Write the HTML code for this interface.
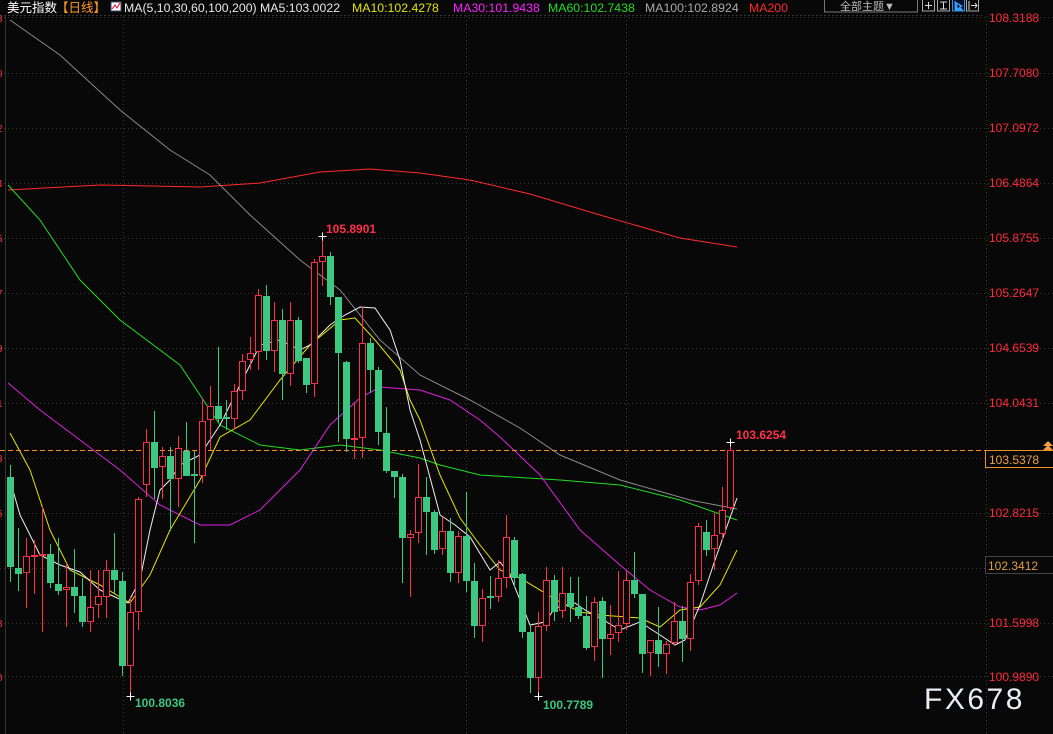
<!DOCTYPE html>
<html><head><meta charset="utf-8"><style>
html,body{margin:0;padding:0;background:#080808;width:1053px;height:734px;overflow:hidden;font-family:"Liberation Sans","Noto Sans CJK SC",sans-serif}
svg{position:absolute;left:0;top:0}
</style></head><body>
<svg id="c" width="1053" height="734" xmlns="http://www.w3.org/2000/svg" font-family="Liberation Sans, Noto Sans CJK SC, sans-serif">
<rect width="1053" height="734" fill="#080808"/>
<g id="grid" stroke="#3a3a3a" stroke-dasharray="1,3" stroke-width="1"></g>
<line x1="5.5" y1="15" x2="5.5" y2="734" stroke="#333"/>
<g id="ma" fill="none" stroke-width="1"></g>
<line x1="0" y1="450.5" x2="1053" y2="450.5" stroke="#ff8c1a" stroke-dasharray="5,3"/>
<g id="cd"></g>
<g id="lbl" font-size="12" font-weight="bold" fill="#ff2a3a"></g>
<!-- top bar -->
<rect x="0" y="0" width="1053" height="15" fill="#080808"/>
<text x="7" y="12" font-size="12.5" fill="#ffffff">美元指数</text>
<text x="56" y="12" font-size="12.5" fill="#ff9a20">【日线】</text>
<rect x="111" y="2" width="10" height="9" fill="#fff" stroke="#446" />
<polyline points="112,9 115,5 117,8 120,3" fill="none" stroke="#e02" stroke-width="1"/>
<text x="124" y="12" font-size="12.3" fill="#e8e8e8">MA(5,10,30,60,100,200)  MA5:103.0022</text>
<text x="352" y="12" font-size="12.3" fill="#e4e400">MA10:102.4278</text>
<text x="453" y="12" font-size="12.3" fill="#ff20ff">MA30:101.9438</text>
<text x="548" y="12" font-size="12.3" fill="#22dd22">MA60:102.7438</text>
<text x="645" y="12" font-size="12.3" fill="#aaaaaa">MA100:102.8924</text>
<text x="749" y="12" font-size="12.3" fill="#ff2a2a">MA200</text>
<rect x="824.5" y="-1" width="93" height="13" fill="#080808" stroke="#777"/>
<text x="840" y="10" font-size="11" fill="#bbb">全部主题▼</text>
<rect x="922.5" y="-1" width="12" height="12" fill="none" stroke="#aaa"/>
<path d="M928.5 2v7M925 5.5h7" stroke="#ddd"/>
<rect x="937.5" y="-1" width="12" height="12" fill="none" stroke="#aaa"/>
<path d="M940 2h7M943.5 2v7M940 9h7" stroke="#ddd"/>
<rect x="952.5" y="-1" width="12" height="12" fill="#04102a" stroke="#3a8ee8"/>
<path d="M955 1v9h8M957 3l5 3-5 3z" stroke="#3a9ef8" fill="#3a9ef8"/>
<rect x="966.5" y="-1" width="12" height="12" fill="none" stroke="#aaa"/>
<path d="M969 1v9M971 5.5h6M975 3l2 2.5-2 2.5" stroke="#ddd" fill="none"/>
<line x1="0" y1="15.5" x2="984" y2="15.5" stroke="#333" stroke-dasharray="2,2"/>
<!-- right axis -->
<g font-size="12" fill="#ff2a3a">
<text x="989" y="22">108.3188</text>
<text x="989" y="77">107.7080</text>
<text x="989" y="132">107.0972</text>
<text x="989" y="187">106.4864</text>
<text x="989" y="242">105.8755</text>
<text x="989" y="297">105.2647</text>
<text x="989" y="352">104.6539</text>
<text x="989" y="407">104.0431</text>
<text x="989" y="517">102.8215</text>
<text x="989" y="627">101.5998</text>
<text x="989" y="681">100.9890</text>
</g>
<rect x="985.5" y="450.5" width="68" height="17" fill="#080808" stroke="#e8902a"/>
<text x="989" y="464" font-size="12" fill="#f0a040">103.5378</text>
<path d="M1043 446l5-5 5 5zM1043 450l5-5 5 5z" fill="#f0a040"/>
<rect x="985.5" y="556.5" width="68" height="17" fill="#080808" stroke="#444"/>
<text x="988" y="570" font-size="12" fill="#e0a040">102.3412</text>
<g font-size="10" fill="#ff2a3a">
<text x="-3" y="22">8</text><text x="-3" y="77">0</text><text x="-3" y="132">2</text><text x="-3" y="187">4</text><text x="-3" y="242">5</text><text x="-3" y="297">7</text><text x="-3" y="352">9</text><text x="-3" y="407">1</text><text x="-3" y="462">3</text><text x="-3" y="517">5</text><text x="-3" y="627">8</text><text x="-3" y="681">0</text>
</g>
<text x="924" y="709" font-size="30" fill="#e8eef4" letter-spacing="2.5">FX678</text>
</svg>
<script>
var NS="http://www.w3.org/2000/svg";
function el(p,t,a){var e=document.createElementNS(NS,t);for(var k in a)e.setAttribute(k,a[k]);p.appendChild(e);return e;}
var g=document.getElementById('grid');
[17,73,128,183,238,293,348,403,458,513,568,623,676].forEach(function(y){el(g,'line',{x1:0,x2:1053,y1:y+.5,y2:y+.5});});
[123,466,626,986].forEach(function(x){el(g,'line',{x1:x+.5,x2:x+.5,y1:16,y2:734});});
var ma=document.getElementById('ma');
var L={
'#ff2a2a':[[8,190],[100,185],[200,187],[260,183],[320,172],[370,169],[420,173],[470,180],[530,194],[600,215],[680,238],[737,247]],
'#8a8a8a':[[10,20],[60,55],[120,110],[170,150],[210,175],[250,215],[300,260],[340,290],[380,340],[420,375],[470,400],[520,428],[560,455],[620,480],[690,500],[737,509]],
'#22dd22':[[8,185],[40,220],[80,280],[120,320],[180,365],[220,425],[260,445],[300,450],[340,445],[380,450],[420,458],[440,465],[480,475],[560,480],[620,485],[680,500],[737,520]],
'#e020e0':[[8,383],[40,410],[80,440],[120,470],[160,505],[200,525],[230,525],[260,510],[300,470],[330,425],[360,398],[380,387],[420,390],[450,400],[480,420],[500,437],[540,475],[580,530],[620,565],[650,590],[680,607],[700,610],[720,605],[737,593]],
'#e4e400':[[10,433],[30,470],[50,530],[70,570],[100,585],[130,603],[150,575],[170,530],[200,480],[220,437],[250,420],[280,380],[310,345],[340,320],[355,318],[375,340],[400,370],[410,400],[420,420],[440,475],[460,518],[480,545],[500,570],[520,578],[560,602],[580,612],[600,615],[640,618],[660,627],[680,610],[700,607],[720,585],[737,550]],
'#f0f0f0':[[10,480],[20,515],[40,555],[60,565],[80,572],[100,590],[115,597],[128,603],[140,580],[150,530],[160,490],[170,480],[180,465],[200,455],[210,440],[220,425],[240,385],[260,345],[280,340],[300,350],[310,345],[330,325],[345,315],[360,307],[375,308],[390,330],[400,360],[410,410],[420,440],[440,515],[455,525],[470,537],[490,570],[500,562],[510,575],[530,625],[545,622],[555,608],[575,603],[585,610],[600,618],[620,630],[640,622],[660,635],[675,645],[685,640],[700,605],[715,560],[737,498]]};
for(var c in L)el(ma,'polyline',{points:L[c].map(function(p){return p.join(',')}).join(' '),stroke:c});
var D=[[0,477,567,465,582],[0,568,574,528,591],[1,556,573,538,608],[1,555,557,540,594],[1,554,556,507,632],[0,554,583,544,588],[0,584,591,538,595],[1,587,590,563,627],[0,587,596,549,613],[0,596,622,578,627],[1,607,622,570,632],[1,596,605,570,618],[1,570,597,560,618],[0,570,580,533,593],[0,581,666,572,676],[1,612,666,596,696],[1,499,612,497,630],[1,442,485,429,497],[0,442,468,411,499],[1,456,467,447,499],[0,456,479,447,531],[1,448,479,436,507],[0,451,476,422,476],[0,474,476,451,543],[1,421,476,398,483],[1,406,420,386,450],[0,406,419,347,422],[0,417,419,400,430],[1,391,419,384,429],[1,361,391,354,400],[1,353,360,337,370],[1,295,352,289,370],[0,296,351,285,360],[1,320,351,302,372],[0,320,374,309,400],[1,320,374,302,386],[0,320,361,317,363],[0,358,385,358,393],[1,262,384,259,397],[1,256,262,237,286],[0,256,297,252,305],[0,297,353,297,442],[0,362,439,361,452],[1,438,440,402,459],[1,343,438,307,458],[0,343,370,338,393],[0,370,432,367,445],[0,433,471,407,473],[0,471,477,471,498],[0,477,538,474,583],[1,534,538,530,597],[1,497,533,464,543],[0,497,512,477,555],[0,512,550,510,554],[1,531,549,517,555],[0,531,573,518,582],[1,536,573,531,583],[0,536,581,492,592],[0,581,626,563,638],[1,598,626,589,642],[0,596,598,576,609],[1,578,597,560,602],[1,537,578,515,588],[0,540,578,537,587],[0,574,632,573,638],[0,632,678,624,693],[1,626,678,612,698],[1,580,626,567,631],[0,580,612,575,621],[1,593,611,567,618],[0,593,607,577,622],[0,607,616,577,619],[0,616,648,596,650],[1,602,647,597,661],[0,601,639,597,678],[1,634,639,605,655],[1,625,633,571,642],[1,580,624,571,630],[0,580,594,552,598],[0,594,654,594,673],[1,640,653,640,676],[0,640,654,607,667],[1,644,654,641,674],[1,621,643,602,646],[0,621,639,606,662],[1,582,639,574,651],[1,526,581,523,585],[0,532,550,520,556],[1,535,549,513,570],[1,510,534,487,540],[1,450,508,442,510]];
var cd=document.getElementById('cd');
D.forEach(function(d,i){var x=10.5+8*i,col=d[0]?'#ff3048':'#3cc880';
el(cd,'line',{x1:x,x2:x,y1:d[3],y2:d[4],stroke:col});
var h=Math.max(d[2]-d[1],1);
if(d[0])el(cd,'rect',{x:x-3,y:d[1]+.5,width:6,height:Math.max(h-1,0.5),fill:'#080808',stroke:col});
else el(cd,'rect',{x:x-3.5,y:d[1],width:7,height:h,fill:col});});
var lb=document.getElementById('lbl');
function t(x,y,s,c){var e=el(lb,'text',{x:x,y:y,fill:c});e.textContent=s;}
function cr(x,y){el(lb,'path',{d:'M'+(x-4)+' '+y+'h8M'+x+' '+(y-4)+'v8',stroke:'#fff','stroke-width':1});}
cr(322.5,236.5);t(326,233,'105.8901','#ff3048');
cr(130.5,696.5);t(135,707,'100.8036','#3cc880');
cr(538.5,696.5);t(543,709,'100.7789','#3cc880');
cr(730.5,442.5);t(736,439,'103.6254','#ff3048');
</script>
</body></html>
